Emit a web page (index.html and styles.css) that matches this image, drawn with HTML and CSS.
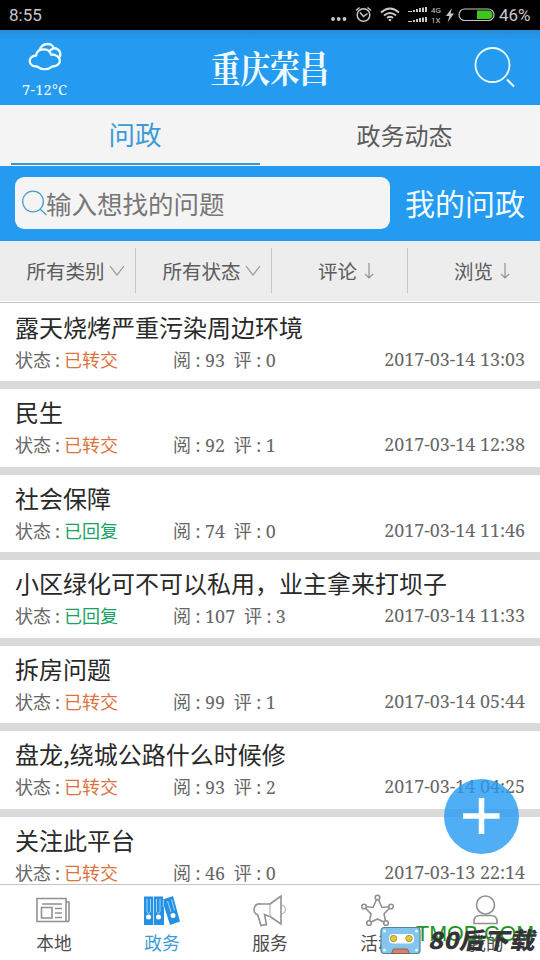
FILE: index.html
```html
<!DOCTYPE html>
<html lang="zh-CN">
<head>
<meta charset="utf-8">
<title>重庆荣昌</title>
<link rel="stylesheet" href="styles.css">
</head>
<body>
<div class="app">
  <div class="status">
    <span class="clock">8:55</span>
    <svg class="status-icons" width="168" height="30" viewBox="330 0 168 30" fill="none" stroke="#c8c8c8" stroke-width="1.5">
      <g fill="#c8c8c8" stroke="none"><circle cx="333" cy="19" r="1.9"/><circle cx="338.700" cy="19" r="1.900"/><circle cx="344.500" cy="19" r="1.900"/></g>
      <circle cx="363.500" cy="15" r="6.300"/><path d="M360 12.500l3.500 4 4-3M356 10.500l3.500-3M371 10.500l-3.500-3"/>
      <path stroke-width="2" d="M381 12.500q9-8 18 0M384 15.500q6-5 12 0M387 18q3-2.400 6 0"/><circle cx="390" cy="20" r="1.300" fill="#c8c8c8" stroke="none"/>
      <g fill="#c8c8c8" stroke="none"><path d="M408 11h4v1h-4zM413 10h2v2h-2zM416 9h2v3h-2zM419 8h2v4h-2zM422 7.500h2v4.500h-2zM425 7h2v5h-2zM408 21h4v1h-4zM413 20h2v2h-2zM416 19h2v3h-2zM419 18h2v4h-2zM422 17.500h2v4.500h-2zM425 17h2v5h-2z"/><path d="M452 8l-6 8h3.500l-2 6.500 6.500-9h-3.500z"/>
      <text class="net" x="431" y="13">4G</text><text class="net" x="431" y="23">1X</text></g>
      <rect x="459" y="9" width="35" height="11.500" rx="5.700" stroke-width="1.200"/><path d="M477 10.500h11q4.500 0 4.500 4.250T488 19h-11z" fill="#3fc51d" stroke="none"/>
    </svg>
    <span class="percent">46%</span>
  </div>

  <header class="header">
    <div class="weather">
      <svg width="36" height="30" viewBox="0 0 36 30" fill="none" stroke="#effaff" stroke-width="2.300"><path d="M10 24.500C1 25 0 14 9 13.500 10 5.500 22 5.500 24 12.500 35 12.500 36 24 25.500 24.500 20 28.500 14 27.500 10 24.500z"/><path d="M12.500 8.500C15-.5 26 1 26.500 6 34 7 35 13 31 16.500"/><path d="M22 9l5-3"/></svg>
      <span>7-12°C</span>
    </div>
    <h1 class="logo">重庆荣昌</h1>
    <svg class="search" width="44" height="44" viewBox="0 0 44 44" fill="none" stroke="#effaff" stroke-width="1.800"><circle cx="20.500" cy="20" r="17"/><path d="M35 34.500l7 7" stroke-width="2"/></svg>
  </header>

  <nav class="tabs">
    <div class="tab tab-on">问政</div>
    <div class="tab">政务动态</div>
  </nav>

  <div class="searchbar">
    <div class="field">
      <svg width="26" height="28" viewBox="0 0 26 28" fill="none" stroke="#4a9bd0" stroke-width="1.300"><circle cx="11" cy="12.500" r="10.400"/><path d="M18 20l6.500 6"/></svg>
      <span>输入想找的问题</span>
    </div>
    <div class="mine">我的问政</div>
  </div>

  <div class="filters">
    <div class="filter">所有类别<svg class="chev" width="16" height="12" viewBox="0 0 16 12"><path d="M1 1l7 9 7-9"/></svg></div>
    <div class="filter">所有状态<svg class="chev" width="16" height="12" viewBox="0 0 16 12"><path d="M1 1l7 9 7-9"/></svg></div>
    <div class="filter sort">评论<svg class="arrow" width="10" height="18" viewBox="0 0 10 18"><path d="M5 1v15M1 12l4 4 4-4"/></svg></div>
    <div class="filter sort">浏览<svg class="arrow" width="10" height="18" viewBox="0 0 10 18"><path d="M5 1v15M1 12l4 4 4-4"/></svg></div>
  </div>

  <main class="list">
    <article class="item"><h2>露天烧烤严重污染周边环境</h2><div class="meta"><span class="state">状态 : <b class="sent">已转交</b></span><span class="counts">阅 : <i>93</i>&nbsp; 评 : <i>0</i></span><time>2017-03-14 13:03</time></div></article>
    <article class="item"><h2>民生</h2><div class="meta"><span class="state">状态 : <b class="sent">已转交</b></span><span class="counts">阅 : <i>92</i>&nbsp; 评 : <i>1</i></span><time>2017-03-14 12:38</time></div></article>
    <article class="item"><h2>社会保障</h2><div class="meta"><span class="state">状态 : <b class="done">已回复</b></span><span class="counts">阅 : <i>74</i>&nbsp; 评 : <i>0</i></span><time>2017-03-14 11:46</time></div></article>
    <article class="item"><h2>小区绿化可不可以私用，业主拿来打坝子</h2><div class="meta"><span class="state">状态 : <b class="done">已回复</b></span><span class="counts">阅 : <i>107</i>&nbsp; 评 : <i>3</i></span><time>2017-03-14 11:33</time></div></article>
    <article class="item"><h2>拆房问题</h2><div class="meta"><span class="state">状态 : <b class="sent">已转交</b></span><span class="counts">阅 : <i>99</i>&nbsp; 评 : <i>1</i></span><time>2017-03-14 05:44</time></div></article>
    <article class="item"><h2>盘龙,绕城公路什么时候修</h2><div class="meta"><span class="state">状态 : <b class="sent">已转交</b></span><span class="counts">阅 : <i>93</i>&nbsp; 评 : <i>2</i></span><time>2017-03-14 04:25</time></div></article>
    <article class="item"><h2>关注此平台</h2><div class="meta"><span class="state">状态 : <b class="sent">已转交</b></span><span class="counts">阅 : <i>46</i>&nbsp; 评 : <i>0</i></span><time>2017-03-13 22:14</time></div></article>
  </main>

  <footer class="nav">
    <div class="nav-item"><svg width="40" height="36" viewBox="0 0 40 36"><path d="M3 4.500h29v23H3zM32 8h3v18q0 1.500-2 1.500h-1M8 10h20M7.500 13.500h10.500v10.500H7.500zM21 14.500h7M21 19h7M21 23.500h7"/></svg><span>本地</span></div>
    <div class="nav-item nav-on"><svg width="40" height="36" viewBox="0 0 40 36"><path class="solid" d="M2 2.500h9.300v28.500H2zM12 2.500h9v3l10-3.500 7 25.500-10 3.500-6-19V31H12z"/><path class="cut" d="M5 5v13q1.500 3 3.500 0V5M14.500 5v13q1.500 3 3.500 0V5M25.500 7l3.500 11M29.500 5.500l3 11M21.300 6v7"/><g class="dot"><circle cx="6.500" cy="23" r="2.500"/><circle cx="16.500" cy="23" r="2.500"/><circle cx="31" cy="21.500" r="2.500"/></g></svg><span>政务</span></div>
    <div class="nav-item"><svg width="40" height="36" viewBox="0 0 40 36"><path d="M20 10l11-8v28l-11-7.500M20 10H11C3 9 2 19 7.500 20.500l3.500 11 5.500-1-2-10 5 2"/><path class="thin" d="M20 10v12.500M32 11q3.500 1 3.500 4.500t-3.500 4.500"/></svg><span>服务</span></div>
    <div class="nav-item"><svg width="40" height="36" viewBox="0 0 40 36"><path d="M19.500 3.500l-4.500 10-9-1 7 7.500-2 9 8.500-4 8.500 4-2-9 7-7.500-9 1z"/><g class="knob"><circle cx="19.500" cy="3.500" r="2.300"/><circle cx="6" cy="12.500" r="2.300"/><circle cx="33" cy="12.500" r="2.300"/><circle cx="11" cy="29" r="2.300"/><circle cx="28" cy="29" r="2.300"/></g></svg><span>活动</span></div>
    <div class="nav-item"><svg width="40" height="36" viewBox="0 0 40 36"><circle cx="19.500" cy="11" r="9"/><path d="M8 29.500v-2q0-6 6-6h11q6 0 6 6v2z"/></svg><span>我的</span></div>
  </footer>

  <div class="fab"><svg width="75" height="75" viewBox="0 0 75 75"><path d="M37.500 19v36M19 37h36.500" stroke="#fff" stroke-width="5.500"/></svg></div>

  <div class="mark">
    <span class="mark-url">TMOB.COM</span>
    <svg class="tape" width="42" height="30" viewBox="0 0 42 30"><rect x="1" y="1.500" width="39" height="26" rx="3" fill="#83c5ed" stroke="#5485a0" stroke-width="1.200"/><rect x="9" y="8" width="25" height="9.500" rx="4" fill="#fff"/><circle cx="13.500" cy="12.500" r="3.200" fill="#e2c832" stroke="#a59a49"/><circle cx="29" cy="12.500" r="3.200" fill="#e2c832" stroke="#a59a49"/><path d="M13.500 23h14l2 4.500h-18z" fill="#d5816c" stroke="#8e625a"/><g fill="#e8f6fd"><circle cx="4.500" cy="5" r="1.500"/><circle cx="36.500" cy="5" r="1.500"/><circle cx="4.500" cy="24" r="1.500"/><circle cx="36.500" cy="24" r="1.500"/></g></svg>
    <span class="mark-name">80后下载</span>
  </div>
</div>
</body>
</html>
```
FILE: styles.css
```css
* { box-sizing: border-box; }
body {
  margin: 0;
  font-family: "Noto Sans CJK SC", sans-serif;
  color: #5b5b5b;
}
.app {
  position: relative;
  width: 540px;
  height: 960px;
  display: flex;
  flex-direction: column;
  overflow: hidden;
  background: #fff;
  white-space: nowrap;
}
.app > * { flex: none; }
svg { display: block; flex: none; }

.status {
  height: 30px;
  padding: 0 9px;
  display: flex;
  align-items: center;
  background: #000;
  color: #c8c8c8;
  font: 17px/30px Roboto, sans-serif;
}
.clock { width: 321px; }
.status-icons { margin-right: 1px; }
.net { font: 8px Roboto, sans-serif; }

.header {
  height: 75px;
  padding: 0 24px 0 22px;
  display: flex;
  background: linear-gradient(#278bd6, #249bf1 10px);
  color: #effaff;
}
.weather {
  width: 60px;
  padding: 12px 0 0 5px;
  font: 15px/20px "Noto Serif", "DejaVu Serif Condensed", serif;
}
.weather span { display: block; margin: 7px 0 0 -5px; font-size: 14.5px; letter-spacing: .3px; }
.logo {
  margin: 0 0 0 114px;
  font-family: "Noto Serif CJK SC", "Noto Sans CJK SC", serif;
  font-size: 37px;
  line-height: 74px;
  font-weight: 700;
  width: 148px;
  transform: scaleX(.8);
}
.search { margin: 15px 0 0 auto; }

.tabs {
  height: 61px;
  padding: 0 11px;
  display: flex;
  background: #f4f4f4;
  border-top: 1px solid #e4fbff;
  font-size: 24px;
  line-height: 58px;
  text-align: center;
}
.tab { width: 249px; margin-right: 20px; flex: none; }
.tab-on {
  font-size: 26.5px;
  line-height: 56px;
  color: #3b9bd6;
  border-bottom: 2px solid #3398cb;
  height: 59px;
  padding-right: 1px;
}

.searchbar {
  height: 75px;
  padding: 11px 15px;
  display: flex;
  gap: 15px;
  background: #249bf1;
}
.field {
  width: 375px;
  height: 52px;
  padding-left: 7px;
  display: flex;
  align-items: center;
  border-radius: 9px;
  background: #f4f4f4;
  color: #777;
  font-size: 25.5px;
}
.field span { margin-left: -2px; line-height: 51px; height: 52px; }
.mine { color: #effaff; font-size: 30px; line-height: 51px; }

.filters {
  height: 62px;
  padding: 7px 0 9px;
  display: flex;
  background: #ededed;
  border-bottom: 1px solid #c5c5c5;
  box-shadow: inset 0 -1px #fff;
  font-size: 19.5px;
}
.filter {
  width: 136px;
  height: 45px;
  padding-left: 26.5px;
  display: flex;
  align-items: center;
  border-right: 1px solid #c6c6c6;
}
.filter:last-child { border: 0; width: 132px; }
.sort { padding-left: 46px; }
.chev, .arrow { fill: none; stroke: #929292; stroke-width: 1.2; }
.chev { margin-left: 4px; }
.arrow { margin-left: 7px; }

.list { height: 581px; overflow: hidden; background: #fff; }
.item {
  height: 85.5px;
  padding: 6px 15px 0;
  border-bottom: 8px solid #dadada;
}
.item:first-child { height: 86px; padding-top: 6.5px; }
.item h2 {
  margin: 0;
  height: 34px;
  font-size: 24px;
  line-height: 33px;
  font-weight: 400;
  color: #292929;
}
.meta {
  display: flex;
  height: 30px;
  font-size: 18px;
  line-height: 30px;
  color: #666;
}
.meta b { font-weight: 400; }
.state { width: 158px; }
.sent { color: #dd7241; }
.done { color: #17a363; }
.counts { letter-spacing: .2px; }
.counts i, time {
  font-family: "Noto Serif", "DejaVu Serif Condensed", serif;
  font-style: normal;
  font-size: 17.9px;
}
time { margin-left: auto; }

.nav {
  height: 76px;
  display: flex;
  background: #fff;
  border-top: 1px solid #c5c5c5;
}
.nav-item {
  width: 108px;
  padding-top: 9px;
  display: flex;
  flex-direction: column;
  align-items: center;
  font-size: 17.7px;
  line-height: 25px;
  color: #4b4b4b;
}
.nav-item svg { fill: none; stroke: #919191; stroke-width: 1.6; }
.nav-item .thin { stroke-width: .8; }
.nav-item .knob { fill: #fff; }
.nav-on { color: #3b9bd6; }
.nav-on .solid { fill: #2591e5; stroke: none; }
.nav-on .cut { stroke: #a9dcff; stroke-width: .9; }
.nav-on .dot { fill: #fff; stroke: none; }

.fab {
  position: absolute;
  left: 443.5px;
  top: 778.5px;
  width: 75px;
  height: 75px;
  border-radius: 50%;
  background: rgba(36, 155, 241, .8);
}

.mark { position: absolute; left: 380px; top: 920px; width: 160px; height: 40px; }
.mark-url {
  position: absolute;
  left: 36px;
  top: 1px;
  font: 21.5px/26px "Liberation Sans", sans-serif;
  color: #219421;
}
.tape { position: absolute; left: 0; top: 6px; }
.mark-name {
  position: absolute;
  left: 50px;
  top: 2px;
  font-size: 23px;
  line-height: 34px;
  font-weight: 900;
  color: #343438;
  transform: skewX(-12deg) scaleX(1.1);
  transform-origin: 0 50%;
}
```
